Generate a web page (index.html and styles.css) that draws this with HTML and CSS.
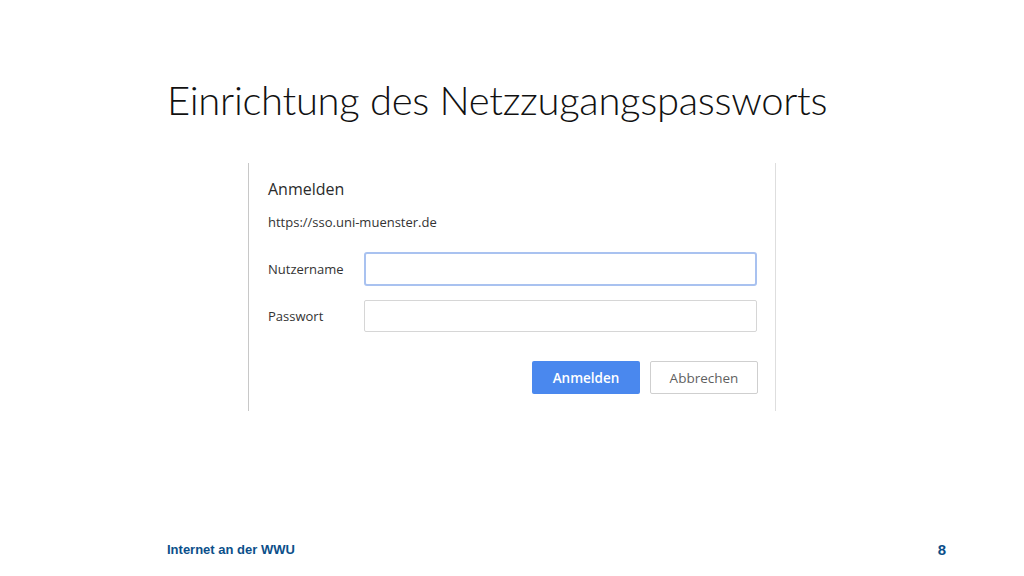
FILE: index.html
```html
<!DOCTYPE html>
<html lang="de">
<head>
    <meta charset="UTF-8">
    <meta name="viewport" content="width=device-width, initial-scale=1.0">
    <title>Einrichtung des Netzzugangspassworts</title>
    <link rel="stylesheet" href="styles.css">
</head>
<body>

    <div class="slide flex flex-col">
        <h1 class="slide-title">Einrichtung des Netzzugangspassworts</h1>

        <div class="dialog flex flex-col">
            <h2 class="dialog-title">Anmelden</h2>
            <p class="dialog-url">https://sso.uni-muenster.de</p>

            <div class="row flex items-center">
                <label for="nutzer">Nutzername</label>
                <input class="field focused" type="text" id="nutzer">
            </div>
            <div class="row row-2 flex items-center">
                <label for="pass">Passwort</label>
                <input class="field" type="password" id="pass">
            </div>

            <div class="actions flex">
                <button class="btn btn-primary">Anmelden</button>
                <button class="btn btn-secondary">Abbrechen</button>
            </div>
        </div>

        <div class="footer flex">
            <span>Internet an der WWU</span>
            <span class="page-num">8</span>
        </div>
    </div>

</body>
</html>
```

FILE: styles.css
```css
* {
    margin: 0;
    padding: 0;
    box-sizing: border-box;
}

body {
    width: 1024px;
    height: 576px;
    background-color: #fff;
    overflow: hidden;
}

.flex {
    display: flex;
}

.flex-col {
    flex-direction: column;
}

.items-center {
    align-items: center;
}

.slide {
    height: 576px;
    padding-left: 167px;
}

.slide-title {
    font-family: "Lato", "Open Sans", sans-serif;
    font-weight: 300;
    font-size: 40px;
    line-height: 50px;
    color: #111;
    margin-top: 75px;
    letter-spacing: -0.3px;
}

/* the sign-in dialog */
.dialog {
    width: 528px;
    height: 248px;
    margin-top: 38px;
    margin-left: 81px;
    padding: 15px 17px 0 19px;
    border-left: 1px solid #c8c8c8;
    border-right: 1px solid #dedede;
    font-family: "Open Sans", "Noto Sans", sans-serif;
    color: #333;
}

.dialog-title {
    font-weight: 400;
    font-size: 16px;
    line-height: 22px;
    color: #2b2b2b;
}

.dialog-url {
    font-size: 13px;
    line-height: 18px;
    margin-top: 13px;
    color: #333;
}

.row {
    margin-top: 21px;
}

.row-2 {
    margin-top: 14px;
}

.row label {
    width: 96px;
    flex-shrink: 0;
    font-size: 13px;
    color: #333;
}

.field {
    width: 393px;
    height: 32px;
    border: 1px solid #d6d6d6;
    border-radius: 2px;
    background: #fff;
    outline: none;
}

.field.focused {
    height: 34px;
    border: 2px solid #a9c2f0;
    border-radius: 3px;
}

.actions {
    justify-content: flex-end;
    gap: 10px;
    margin-top: 29px;
}

.btn {
    width: 108px;
    height: 33px;
    border-radius: 2px;
    font-family: "Open Sans", "Noto Sans", sans-serif;
    font-size: 13.5px;
}

.btn-primary {
    border: none;
    background-color: #4a88ee;
    color: #fff;
    font-weight: 600;
}

.btn-secondary {
    border: 1px solid #cfcfcf;
    background-color: #fff;
    color: #5f5f5f;
    font-weight: 400;
}

.footer {
    justify-content: space-between;
    align-items: center;
    width: 779px;
    margin-top: auto;
    margin-bottom: 18px;
    font-family: "Liberation Sans", Arial, sans-serif;
    font-weight: bold;
    font-size: 13px;
    color: #0b4f8a;
}

.page-num {
    font-size: 15px;
}
```
